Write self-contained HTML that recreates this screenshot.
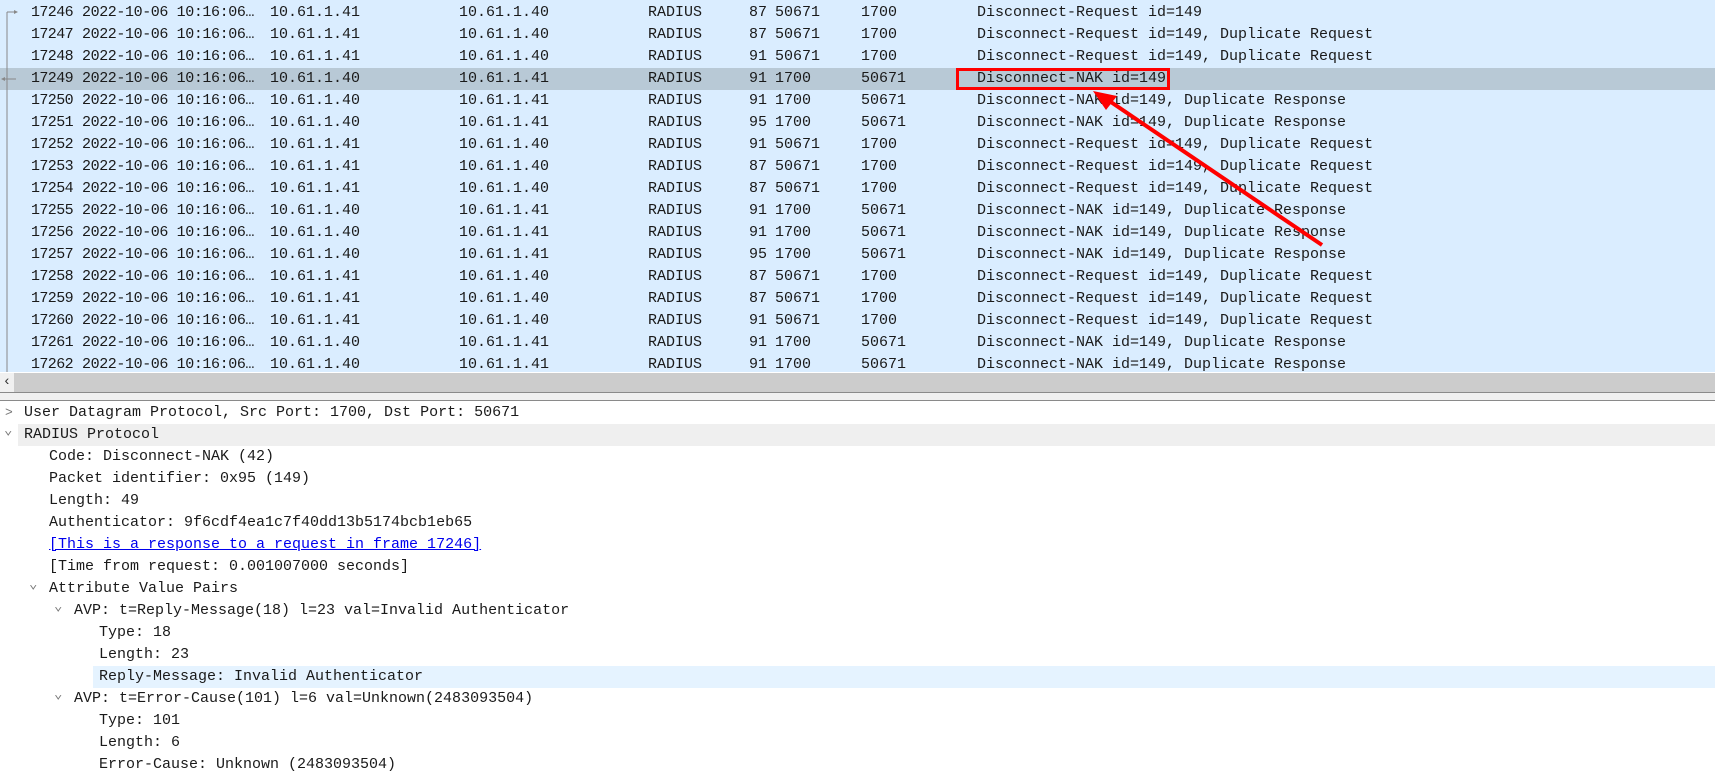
<!DOCTYPE html>
<html><head><meta charset="utf-8"><style>
html,body{margin:0;padding:0;width:1715px;height:783px;overflow:hidden;background:#fff;font-family:"Liberation Mono",monospace;font-size:15px;color:#1a1a1a}
.r{position:absolute;left:0;width:1715px;height:22px;line-height:22px;background:#daedff;white-space:pre}
.r span{position:absolute;top:0}
.sel{background:#b8c9d6}
.d{position:absolute;left:0;width:1715px;height:22px;line-height:22px;white-space:pre}
.d span{position:absolute;top:0}
.ch{position:absolute;color:#777;font-size:13px}
</style></head><body>
<div style="position:absolute;left:0;top:0;width:1715px;height:372px;background:#daedff"></div>
<div id="list"></div>
<div style="position:absolute;left:0;top:372px;width:1715px;height:1px;background:#fff"></div>
<div style="position:absolute;left:0;top:373px;width:1715px;height:19px;background:#cccccc"></div>
<div style="position:absolute;left:0;top:373px;width:14px;height:19px;background:#f0f0f0;color:#333;font-size:14px;line-height:19px;text-align:center">&lsaquo;</div>
<div style="position:absolute;left:0;top:392px;width:1715px;height:1px;background:#8a8a8a"></div>
<div style="position:absolute;left:0;top:393px;width:1715px;height:7px;background:#f0f0f0"></div>
<div style="position:absolute;left:0;top:400px;width:1715px;height:1px;background:#8a8a8a"></div>
<div id="det"></div>
<svg style="position:absolute;left:0;top:0" width="1715" height="783">
<line x1="7" y1="12" x2="7" y2="372" stroke="#888" stroke-width="1"/>
<line x1="7" y1="12" x2="16" y2="12" stroke="#888"/><path d="M14 10 L18 12 L14 14 Z" fill="#888"/>
<line x1="3" y1="79" x2="16" y2="79" stroke="#888"/><path d="M5 77 L1 79 L5 81 Z" fill="#888"/>
<rect x="957.5" y="69.5" width="211" height="19" fill="none" stroke="#f00" stroke-width="3"/>
<line x1="1322" y1="245" x2="1105" y2="98" stroke="#f00" stroke-width="4"/>
<path d="M1093 91 L1117 96 L1106 110 Z" fill="#f00"/>
</svg>
<script>
var rows=[
["17246","10.61.1.41","10.61.1.40","87","50671","1700","Disconnect-Request id=149"],
["17247","10.61.1.41","10.61.1.40","87","50671","1700","Disconnect-Request id=149, Duplicate Request"],
["17248","10.61.1.41","10.61.1.40","91","50671","1700","Disconnect-Request id=149, Duplicate Request"],
["17249","10.61.1.40","10.61.1.41","91","1700","50671","Disconnect-NAK id=149"],
["17250","10.61.1.40","10.61.1.41","91","1700","50671","Disconnect-NAK id=149, Duplicate Response"],
["17251","10.61.1.40","10.61.1.41","95","1700","50671","Disconnect-NAK id=149, Duplicate Response"],
["17252","10.61.1.41","10.61.1.40","91","50671","1700","Disconnect-Request id=149, Duplicate Request"],
["17253","10.61.1.41","10.61.1.40","87","50671","1700","Disconnect-Request id=149, Duplicate Request"],
["17254","10.61.1.41","10.61.1.40","87","50671","1700","Disconnect-Request id=149, Duplicate Request"],
["17255","10.61.1.40","10.61.1.41","91","1700","50671","Disconnect-NAK id=149, Duplicate Response"],
["17256","10.61.1.40","10.61.1.41","91","1700","50671","Disconnect-NAK id=149, Duplicate Response"],
["17257","10.61.1.40","10.61.1.41","95","1700","50671","Disconnect-NAK id=149, Duplicate Response"],
["17258","10.61.1.41","10.61.1.40","87","50671","1700","Disconnect-Request id=149, Duplicate Request"],
["17259","10.61.1.41","10.61.1.40","87","50671","1700","Disconnect-Request id=149, Duplicate Request"],
["17260","10.61.1.41","10.61.1.40","91","50671","1700","Disconnect-Request id=149, Duplicate Request"],
["17261","10.61.1.40","10.61.1.41","91","1700","50671","Disconnect-NAK id=149, Duplicate Response"],
["17262","10.61.1.40","10.61.1.41","91","1700","50671","Disconnect-NAK id=149, Duplicate Response"]];
var h="";
rows.forEach(function(r,i){
h+='<div class="r'+(i==3?' sel':'')+'" style="top:'+(2+22*i)+'px"><span style="left:31px;letter-spacing:-0.6px">'+r[0]+'</span><span style="left:82px;letter-spacing:-0.4px">2022-10-06 10:16:06…</span><span style="left:270px">'+r[1]+'</span><span style="left:459px">'+r[2]+'</span><span style="left:648px">RADIUS</span><span style="left:749px">'+r[3]+'</span><span style="left:775px">'+r[4]+'</span><span style="left:861px">'+r[5]+'</span><span style="left:977px">'+r[6]+'</span></div>';
});
document.getElementById("list").innerHTML=h;
var d=[
[0,">","User Datagram Protocol, Src Port: 1700, Dst Port: 50671"],
[0,"v","RADIUS Protocol"],
[1,"","Code: Disconnect-NAK (42)"],
[1,"","Packet identifier: 0x95 (149)"],
[1,"","Length: 49"],
[1,"","Authenticator: 9f6cdf4ea1c7f40dd13b5174bcb1eb65"],
[1,"L","[This is a response to a request in frame 17246]"],
[1,"","[Time from request: 0.001007000 seconds]"],
[1,"v","Attribute Value Pairs"],
[2,"v","AVP: t=Reply-Message(18) l=23 val=Invalid Authenticator"],
[3,"","Type: 18"],
[3,"","Length: 23"],
[3,"","Reply-Message: Invalid Authenticator"],
[2,"v","AVP: t=Error-Cause(101) l=6 val=Unknown(2483093504)"],
[3,"","Type: 101"],
[3,"","Length: 6"],
[3,"","Error-Cause: Unknown (2483093504)"]];
var xs=[24,49,74,99];
h="";
d.forEach(function(l,k){
var top=402+22*k,x=xs[l[0]],bg="";
if(k==1)bg="background:#efefef;left:18px;width:1697px;";
if(k==12)bg="background:#e5f3ff;left:93px;width:1622px;";
var c="";
if(l[1]==">")c='<span class="ch" style="left:'+(x-19)+'px">&gt;</span>';
if(l[1]=="v")c='<span class="ch" style="left:'+(x-20)+'px;top:-4px;font-size:14px">&#8964;</span>';
var st=l[1]=="L"?'color:#0000ee;text-decoration:underline;':'';
if(bg)h+='<div style="position:absolute;top:'+top+'px;height:22px;'+bg+'"></div>';
h+='<div class="d" style="top:'+top+'px">'+c+'<span style="left:'+x+'px;'+st+'">'+l[2]+'</span></div>';
});
document.getElementById("det").innerHTML=h;
</script>
</body></html>
